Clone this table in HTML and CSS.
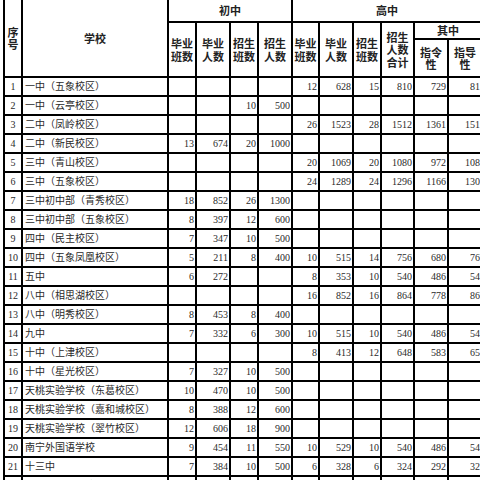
FILE: index.html
```html
<!DOCTYPE html>
<html lang="zh">
<head>
<meta charset="utf-8">
<link rel="stylesheet" href="styles.css">
</head>
<body>
<table class="sheet">
  <colgroup>
    <col class="c-no"><col class="c-name">
    <col class="c-a"><col class="c-b"><col class="c-a"><col class="c-b">
    <col class="c-c"><col class="c-b"><col class="c-a"><col class="c-d"><col class="c-b"><col class="c-b">
  </colgroup>
  <thead>
    <tr class="h1">
      <th rowspan="3">序<br>号</th>
      <th rowspan="3">学校</th>
      <th colspan="4">初中</th>
      <th colspan="6">高中</th>
    </tr>
    <tr class="h2">
      <th rowspan="2">毕业<br>班数</th>
      <th rowspan="2">毕业<br>人数</th>
      <th rowspan="2">招生<br>班数</th>
      <th rowspan="2">招生<br>人数</th>
      <th rowspan="2">毕业<br>班数</th>
      <th rowspan="2">毕业<br>人数</th>
      <th rowspan="2">招生<br>班数</th>
      <th rowspan="2">招生<br>人数<br>合计</th>
      <th colspan="2">其中</th>
    </tr>
    <tr class="h3">
      <th>指令<br>性</th>
      <th>指导<br>性</th>
    </tr>
  </thead>
  <tbody>
    <tr><td>1</td><td>一中（五象校区）</td><td></td><td></td><td></td><td></td><td>12</td><td>628</td><td>15</td><td>810</td><td>729</td><td>81</td></tr>
    <tr><td>2</td><td>一中（云亭校区）</td><td></td><td></td><td>10</td><td>500</td><td></td><td></td><td></td><td></td><td></td><td></td></tr>
    <tr><td>3</td><td>二中（凤岭校区）</td><td></td><td></td><td></td><td></td><td>26</td><td>1523</td><td>28</td><td>1512</td><td>1361</td><td>151</td></tr>
    <tr><td>4</td><td>二中（新民校区）</td><td>13</td><td>674</td><td>20</td><td>1000</td><td></td><td></td><td></td><td></td><td></td><td></td></tr>
    <tr><td>5</td><td>三中（青山校区）</td><td></td><td></td><td></td><td></td><td>20</td><td>1069</td><td>20</td><td>1080</td><td>972</td><td>108</td></tr>
    <tr><td>6</td><td>三中（五象校区）</td><td></td><td></td><td></td><td></td><td>24</td><td>1289</td><td>24</td><td>1296</td><td>1166</td><td>130</td></tr>
    <tr><td>7</td><td>三中初中部（青秀校区）</td><td>18</td><td>852</td><td>26</td><td>1300</td><td></td><td></td><td></td><td></td><td></td><td></td></tr>
    <tr><td>8</td><td>三中初中部（五象校区）</td><td>8</td><td>397</td><td>12</td><td>600</td><td></td><td></td><td></td><td></td><td></td><td></td></tr>
    <tr><td>9</td><td>四中（民主校区）</td><td>7</td><td>347</td><td>10</td><td>500</td><td></td><td></td><td></td><td></td><td></td><td></td></tr>
    <tr><td>10</td><td>四中（五象凤凰校区）</td><td>5</td><td>211</td><td>8</td><td>400</td><td>10</td><td>515</td><td>14</td><td>756</td><td>680</td><td>76</td></tr>
    <tr><td>11</td><td>五中</td><td>6</td><td>272</td><td></td><td></td><td>8</td><td>353</td><td>10</td><td>540</td><td>486</td><td>54</td></tr>
    <tr><td>12</td><td>八中（相思湖校区）</td><td></td><td></td><td></td><td></td><td>16</td><td>852</td><td>16</td><td>864</td><td>778</td><td>86</td></tr>
    <tr><td>13</td><td>八中（明秀校区）</td><td>8</td><td>453</td><td>8</td><td>400</td><td></td><td></td><td></td><td></td><td></td><td></td></tr>
    <tr><td>14</td><td>九中</td><td>7</td><td>332</td><td>6</td><td>300</td><td>10</td><td>515</td><td>10</td><td>540</td><td>486</td><td>54</td></tr>
    <tr><td>15</td><td>十中（上津校区）</td><td></td><td></td><td></td><td></td><td>8</td><td>413</td><td>12</td><td>648</td><td>583</td><td>65</td></tr>
    <tr><td>16</td><td>十中（星光校区）</td><td>7</td><td>327</td><td>10</td><td>500</td><td></td><td></td><td></td><td></td><td></td><td></td></tr>
    <tr><td>17</td><td>天桃实验学校（东葛校区）</td><td>10</td><td>470</td><td>10</td><td>500</td><td></td><td></td><td></td><td></td><td></td><td></td></tr>
    <tr><td>18</td><td>天桃实验学校（嘉和城校区）</td><td>8</td><td>388</td><td>12</td><td>600</td><td></td><td></td><td></td><td></td><td></td><td></td></tr>
    <tr><td>19</td><td>天桃实验学校（翠竹校区）</td><td>12</td><td>606</td><td>18</td><td>900</td><td></td><td></td><td></td><td></td><td></td><td></td></tr>
    <tr><td>20</td><td>南宁外国语学校</td><td>9</td><td>454</td><td>11</td><td>550</td><td>10</td><td>529</td><td>10</td><td>540</td><td>486</td><td>54</td></tr>
    <tr><td>21</td><td>十三中</td><td>7</td><td>384</td><td>10</td><td>500</td><td>6</td><td>328</td><td>6</td><td>324</td><td>292</td><td>32</td></tr>
    <tr><td>22</td><td>十四中（五象校区）</td><td></td><td></td><td></td><td></td><td></td><td></td><td></td><td></td><td></td><td></td></tr>
  </tbody>
</table>
</body>
</html>
```
FILE: styles.css
```css
html, body {
  margin: 0;
  padding: 0;
  background: #fff;
  overflow: hidden;
  width: 480px;
  height: 480px;
}

.sheet {
  border-collapse: collapse;
  table-layout: fixed;
  width: 478px;
  margin: -2px 0 0 3px;
  font-family: "Liberation Serif", "Noto Sans CJK SC", serif;
  font-size: 10px;
  color: #2a2a2a;
}

.c-no { width: 18px; }
.c-name { width: 146px; }
.c-a { width: 28px; }
.c-b { width: 34px; }
.c-c { width: 27px; }
.c-d { width: 33px; }

.sheet th,
.sheet td {
  border: 2px solid #000;
  padding: 0;
  overflow: hidden;
  white-space: nowrap;
}

.sheet th {
  font-family: "Noto Sans CJK SC", "Liberation Sans", sans-serif;
  font-weight: 700;
  font-size: 11px;
  line-height: 12.5px;
  color: #222;
  text-align: center;
  vertical-align: middle;
}

.h1 { height: 23px; }
.h2 { height: 17px; }
.h3 { height: 38px; }

.sheet tbody tr { height: 19px; }

.sheet td {
  text-align: right;
  padding-right: 1px;
  line-height: 12px;
  vertical-align: middle;
}

.sheet td:first-child {
  text-align: center;
  padding-right: 0;
}

.sheet td:nth-child(2) {
  text-align: left;
  padding-left: 2px;
}
```
